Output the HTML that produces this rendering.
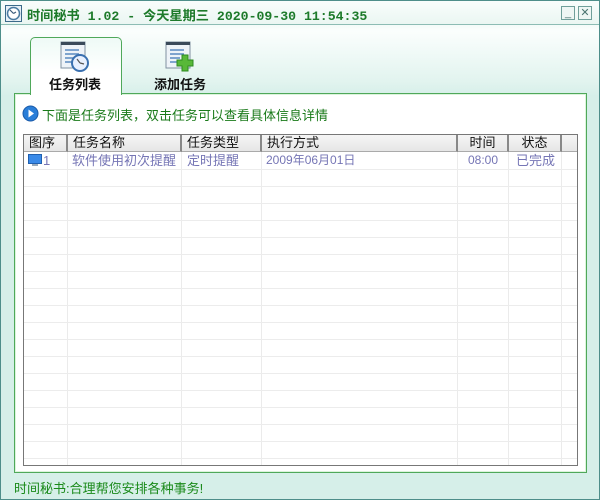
<!DOCTYPE html>
<html><head><meta charset="utf-8"><style>
*{margin:0;padding:0;box-sizing:border-box}
body{width:600px;height:500px;overflow:hidden;font-family:"Liberation Sans","Noto Sans CJK SC","WenQuanYi Zen Hei",sans-serif;font-size:12px;background:#d8f0ea;position:relative}
.win{position:absolute;left:0;top:0;width:600px;height:500px;border:1px solid #4e8e8a;background:linear-gradient(#f4fbf9 25px,#fbfefd 30px,#e2f4ef 80px,#d6efe9 95px,#d6efe9)}
.title{position:absolute;left:0;top:0;width:598px;height:24px;border-bottom:1px solid #8cbcb4;background:linear-gradient(#f9fdfc,#eaf6f2)}
.title .t{position:absolute;left:26px;top:4px;font-family:"Liberation Mono","Noto Sans CJK SC",monospace;font-weight:bold;font-size:13.2px;color:#1d7a2a;white-space:pre}
.btn{position:absolute;top:5px;width:14px;height:14px;border:1px solid #6f9f9a;background:#eef6f4;color:#4a7470;font-size:11px;line-height:12px;text-align:center}
.tab{position:absolute;left:29px;top:36px;width:92px;height:58px;border:1px solid #4fa85a;border-bottom:none;border-radius:5px 5px 0 0;background:linear-gradient(#eefaf6,#fff 60%);z-index:2}
.tabl{position:absolute;font-weight:bold;font-size:13px;color:#111;z-index:3}
.panel{position:absolute;left:14px;top:93px;width:573px;height:380px;border:1px solid #4fa85a;background:#fff;box-shadow:inset 0 0 0 1px #dcf4dc}
.info{position:absolute;left:42px;top:105px;color:#1a7a1a;font-size:13px}
.tbl{position:absolute;left:23px;top:134px;width:555px;height:332px;border:1px solid #777;background:#fff;overflow:hidden}
.hd{position:absolute;left:0;top:0;height:17px;background:linear-gradient(#f5f5f5,#e6e6e6);border-right:2px solid #888;border-bottom:1px solid #aaa;font-size:13px;line-height:16px;padding-left:5px;color:#111}
.vl{position:absolute;top:17px;bottom:0;width:1px;background:#ebebeb}
.hl{position:absolute;left:0;right:0;height:1px;background:#ececec}
.cell{position:absolute;top:17px;font-size:13px;line-height:17px;color:#7575b5}
.status{position:absolute;left:14px;top:478px;color:#1a8a1a;font-size:13px}
</style></head><body>
<div class="win">
<div class="title">
<svg style="position:absolute;left:4px;top:4px" width="17" height="17" viewBox="0 0 17 17"><rect x="0.5" y="0.5" width="16" height="16" fill="#e8f0f6" stroke="#3c6a8a"/><circle cx="8.5" cy="8.5" r="6" fill="#fff" stroke="#4a7aa0" stroke-width="1.5"/><path d="M8.5 8.5L5 5M8.5 8.5L11 7" stroke="#3a5a7a" stroke-width="1.2"/></svg>
<div class="t">时间秘书 1.02 - 今天星期三 2020-09-30 11:54:35</div>
<div class="btn" style="left:560px">_</div><div class="btn" style="left:577px">✕</div>
</div>
<div class="tab"></div>
<svg style="position:absolute;left:58px;top:40px;z-index:4" width="32" height="32" viewBox="0 0 32 32"><rect x="2" y="1" width="24" height="26" fill="#eef3f8" stroke="#8090a0"/><rect x="2" y="1" width="24" height="3" fill="#3a4a5a"/><path d="M6 9h14M6 13h14M6 17h10M6 21h8" stroke="#5a8ac0" stroke-width="1.5"/><circle cx="21" cy="22" r="8" fill="#e8f0ff" stroke="#3a70b0" stroke-width="2"/><path d="M21 22l-3-4M21 22l4 1" stroke="#555" stroke-width="1.2"/></svg>
<div class="tabl" style="left:48px;top:73px">任务列表</div>
<svg style="position:absolute;left:163px;top:40px;z-index:4" width="32" height="32" viewBox="0 0 32 32"><rect x="2" y="1" width="24" height="26" fill="#eef3f8" stroke="#8090a0"/><rect x="2" y="1" width="24" height="3" fill="#3a4a5a"/><path d="M6 9h14M6 13h14M6 17h10M6 21h8" stroke="#5a8ac0" stroke-width="1.5"/><path d="M18 14h6v5h5v6h-5v5h-6v-5h-5v-6h5z" fill="#58b838" stroke="#2d8a20"/></svg>
<div class="tabl" style="left:153px;top:73px">添加任务</div>
</div>
<div class="panel"></div>
<svg style="position:absolute;left:22px;top:105px" width="17" height="17" viewBox="0 0 17 17"><circle cx="8.5" cy="8.5" r="7.5" fill="#2a7ed8" stroke="#1a5aa8"/><path d="M6.5 4.5L12 8.5L6.5 12.5z" fill="#fff"/></svg>
<div class="info">下面是任务列表，双击任务可以查看具体信息详情</div>
<div class="tbl">
<div class="hd" style="left:0;width:44px">图序</div>
<div class="hd" style="left:44px;width:114px">任务名称</div>
<div class="hd" style="left:158px;width:80px">任务类型</div>
<div class="hd" style="left:238px;width:196px">执行方式</div>
<div class="hd" style="left:434px;width:51px;text-align:center;padding:0">时间</div>
<div class="hd" style="left:485px;width:53px;text-align:center;padding:0">状态</div>
<div class="hd" style="left:538px;width:20px;border-right:none"></div>
<div class="vl" style="left:43px"></div><div class="vl" style="left:157px"></div><div class="vl" style="left:237px"></div><div class="vl" style="left:433px"></div><div class="vl" style="left:484px"></div><div class="vl" style="left:537px"></div>
<div class="hl" style="top:34px"></div><div class="hl" style="top:51px"></div><div class="hl" style="top:68px"></div><div class="hl" style="top:85px"></div><div class="hl" style="top:102px"></div><div class="hl" style="top:119px"></div><div class="hl" style="top:136px"></div><div class="hl" style="top:153px"></div><div class="hl" style="top:170px"></div><div class="hl" style="top:187px"></div><div class="hl" style="top:204px"></div><div class="hl" style="top:221px"></div><div class="hl" style="top:238px"></div><div class="hl" style="top:255px"></div><div class="hl" style="top:272px"></div><div class="hl" style="top:289px"></div><div class="hl" style="top:306px"></div><div class="hl" style="top:323px"></div>
<svg style="position:absolute;left:4px;top:19px" width="14" height="13" viewBox="0 0 14 13"><rect x="0.5" y="0.5" width="13" height="9" fill="#3a8ae8" stroke="#2060b0"/><rect x="4" y="10" width="6" height="2" fill="#9ab"/></svg>
<div class="cell" style="left:19px">1</div>
<div class="cell" style="left:48px">软件使用初次提醒</div>
<div class="cell" style="left:163px">定时提醒</div>
<div class="cell" style="left:242px;font-size:12px">2009年06月01日</div>
<div class="cell" style="left:444px;font-size:12px">08:00</div>
<div class="cell" style="left:492px">已完成</div>
</div>
<div class="status">时间秘书:合理帮您安排各种事务!</div>
</body></html>
